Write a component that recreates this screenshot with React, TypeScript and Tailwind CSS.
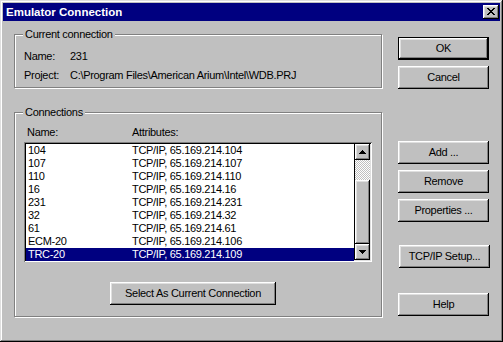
const connections = [
  { name: '104', attr: 'TCP/IP, 65.169.214.104' },
  { name: '107', attr: 'TCP/IP, 65.169.214.107' },
  { name: '110', attr: 'TCP/IP, 65.169.214.110' },
  { name: '16', attr: 'TCP/IP, 65.169.214.16' },
  { name: '231', attr: 'TCP/IP, 65.169.214.231' },
  { name: '32', attr: 'TCP/IP, 65.169.214.32' },
  { name: '61', attr: 'TCP/IP, 65.169.214.61' },
  { name: 'ECM-20', attr: 'TCP/IP, 65.169.214.106' },
  { name: 'TRC-20', attr: 'TCP/IP, 65.169.214.109' },
];

const raised =
  'shadow-[inset_-1px_-1px_#000,inset_1px_1px_#fff,inset_-2px_-2px_#808080,inset_2px_2px_#dfdfdf]';
const etched = 'border border-[#808080] shadow-[inset_1px_1px_#fff,1px_1px_#fff]';

function Button({
  label,
  width = 'w-[91px]',
  isDefault = false,
  className = '',
}: {
  label: string;
  width?: string;
  isDefault?: boolean;
  className?: string;
}) {
  return (
    <div
      className={`${width} h-[23px] bg-[#c0c0c0] ${isDefault ? 'border border-black' : ''} ${className}`}
    >
      <div className={`w-full h-full flex items-center justify-center ${raised}`}>
        <span className="leading-[13px]">{label}</span>
      </div>
    </div>
  );
}

function Arrow({ down = false }: { down?: boolean }) {
  return (
    <svg width="7" height="4" viewBox="0 0 7 4" shapeRendering="crispEdges">
      {down ? (
        <path d="M0 0h7v1H0zM1 1h5v1H1zM2 2h3v1H2zM3 3h1v1H3z" fill="#000" />
      ) : (
        <path d="M3 0h1v1H3zM2 1h3v1H2zM1 2h5v1H1zM0 3h7v1H0z" fill="#000" />
      )}
    </svg>
  );
}

function GroupBox({
  label,
  className,
  children,
}: {
  label: string;
  className: string;
  children: React.ReactNode;
}) {
  return (
    <div className={`relative ${etched} ${className}`}>
      <span className="absolute left-[8px] top-[-7px] px-[2px] bg-[#c0c0c0] leading-[13px]">
        {label}
      </span>
      {children}
    </div>
  );
}

export default function App() {
  return (
    <div
      className="w-[503px] h-[342px] bg-[#c0c0c0] p-[3px] flex flex-col text-black text-[11px] tracking-[-0.3px] shadow-[inset_-1px_-1px_#000,inset_1px_1px_#dfdfdf,inset_-2px_-2px_#808080,inset_2px_2px_#fff]"
      style={{ fontFamily: '"Liberation Sans", Arial, sans-serif' }}
    >
      {/* Title bar */}
      <div className="h-[18px] bg-[#000080] flex items-center justify-between pl-[3px] pr-[1px]">
        <span className="text-white font-bold text-[11.5px] tracking-normal leading-[18px]">
          Emulator Connection
        </span>
        <div className={`w-[16px] h-[14px] bg-[#c0c0c0] flex items-center justify-center ${raised}`}>
          <svg width="8" height="7" viewBox="0 0 8 7" shapeRendering="crispEdges" className="mt-[-1px]">
            <path
              d="M0 0h2v1H0zM6 0h2v1H6zM1 1h2v1H1zM5 1h2v1H5zM2 2h4v1H2zM3 3h2v1H3zM2 4h4v1H2zM1 5h2v1H1zM5 5h2v1H5zM0 6h2v1H0zM6 6h2v1H6z"
              fill="#000"
            />
          </svg>
        </div>
      </div>

      {/* Body */}
      <div className="flex pl-[11px] pt-[13px]">
        <div className="w-[368px] flex flex-col">
          <GroupBox label="Current connection" className="h-[54px] pt-[12px] pl-[9px]">
            <div className="flex leading-[19px]">
              <span className="w-[46px]">Name:</span>
              <span>231</span>
            </div>
            <div className="flex leading-[19px]">
              <span className="w-[46px]">Project:</span>
              <span>C:\Program Files\American Arium\Intel\WDB.PRJ</span>
            </div>
          </GroupBox>

          <GroupBox label="Connections" className="mt-[24px] h-[205px] pt-[13px] pl-[9px]">
            <div className="flex h-[13px] leading-[13px] pl-[3px]">
              <span className="w-[105px]">Name:</span>
              <span>Attributes:</span>
            </div>
            <div className="mt-[3px] w-[348px] h-[120px] bg-white flex shadow-[inset_1px_1px_#808080,inset_-1px_-1px_#fff,inset_2px_2px_#000,inset_-2px_-2px_#dfdfdf] p-[2px]">
              <div className="flex-1 flex flex-col">
                {connections.map((c, i) => {
                  const sel = i === connections.length - 1;
                  return (
                    <div
                      key={c.name}
                      className={`flex-1 flex items-center pl-[2px] leading-[13px] ${
                        sel ? 'bg-[#000080] text-white' : ''
                      }`}
                    >
                      <span className="w-[104px]">{c.name}</span>
                      <span>{c.attr}</span>
                    </div>
                  );
                })}
              </div>
              <div className="w-[16px] flex flex-col border-l border-black">
                <div className={`h-[16px] bg-[#c0c0c0] flex items-center justify-center ${raised}`}>
                  <Arrow />
                </div>
                <div className="h-[20px] bg-[repeating-conic-gradient(#c0c0c0_0%_25%,#ffffff_0%_50%)] bg-[length:2px_2px]" />
                <div className={`h-[64px] bg-[#c0c0c0] ${raised}`} />
                <div className={`h-[16px] bg-[#c0c0c0] flex items-center justify-center ${raised}`}>
                  <Arrow down />
                </div>
              </div>
            </div>
            <Button label="Select As Current Connection" width="w-[166px]" className="mt-[20px] ml-[86px]" />
          </GroupBox>
        </div>

        <div className="ml-[16px] mt-[3px] flex flex-col">
          <Button label="OK" isDefault />
          <Button label="Cancel" className="mt-[6px]" />
          <Button label="Add ..." className="mt-[52px]" />
          <Button label="Remove" className="mt-[6px]" />
          <Button label="Properties ..." className="mt-[6px]" />
          <Button label="TCP/IP Setup..." className="mt-[23px] ml-[1px]" />
          <Button label="Help" className="mt-[25px]" />
        </div>
      </div>
    </div>
  );
}
